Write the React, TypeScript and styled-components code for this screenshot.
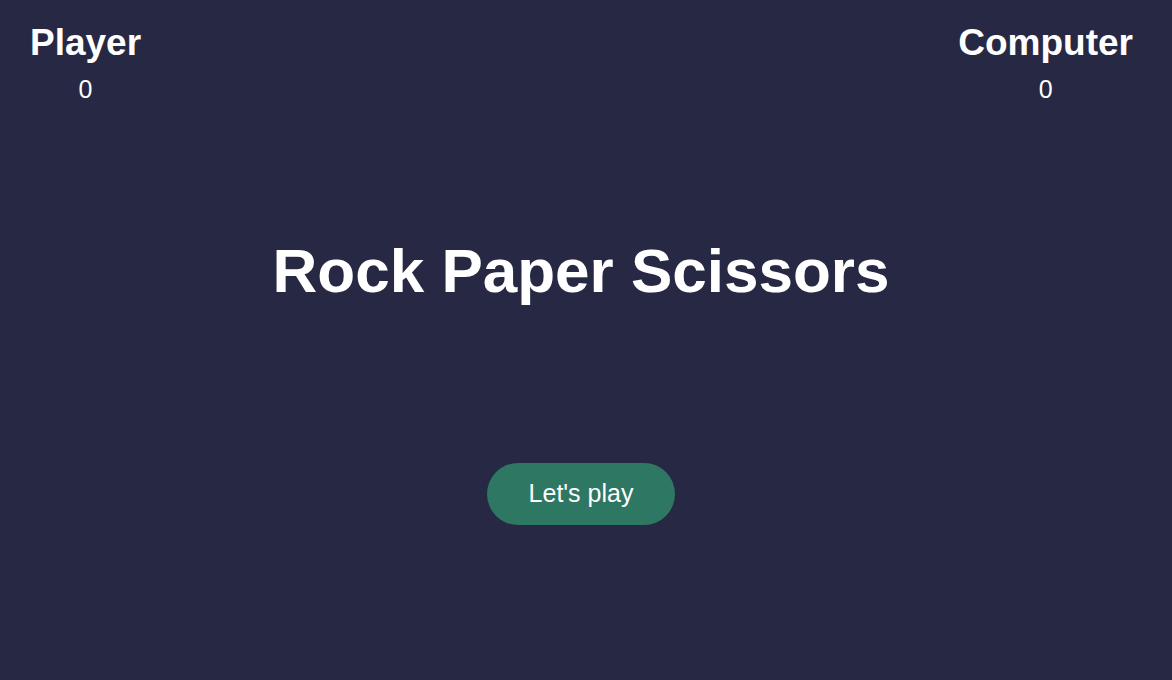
import React from "react";
import styled, { createGlobalStyle } from "styled-components";

const GlobalStyle = createGlobalStyle`
  html, body { margin: 0; padding: 0; }
  body {
    background: #272944;
    color: #ffffff;
    font-family: "Liberation Sans", Arial, sans-serif;
  }
`;

const Page = styled.div`
  width: 1172px;
  height: 680px;
  display: flex;
  flex-direction: column;
  box-sizing: border-box;
`;

const ScoreBar = styled.header`
  display: flex;
  justify-content: space-between;
  padding: 22px 39px 0 30px;
`;

const ScoreBlock = styled.div`
  display: flex;
  flex-direction: column;
  align-items: center;
`;

const ScoreLabel = styled.h2`
  margin: 0;
  font-size: 37px;
  font-weight: 700;
  line-height: 1.15;
`;

const ScoreValue = styled.div`
  font-size: 25px;
  line-height: 1.15;
  margin-top: 10px;
`;

const Main = styled.main`
  display: flex;
  flex-direction: column;
  align-items: center;
  padding-right: 10px;
`;

const Title = styled.h1`
  margin: 132px 0 0;
  text-align: center;
  font-size: 62px;
  font-weight: 700;
  line-height: 1.15;
`;

const PlayButton = styled.button`
  margin-top: 156px;
  width: 188px;
  height: 62px;
  border: none;
  border-radius: 31px;
  background: #2e7762;
  color: #ffffff;
  font-family: "Liberation Sans", Arial, sans-serif;
  font-size: 25px;
  cursor: pointer;
`;

export default function App() {
  return (
    <>
      <GlobalStyle />
      <Page>
        <ScoreBar>
          <ScoreBlock>
            <ScoreLabel>Player</ScoreLabel>
            <ScoreValue>0</ScoreValue>
          </ScoreBlock>
          <ScoreBlock>
            <ScoreLabel>Computer</ScoreLabel>
            <ScoreValue>0</ScoreValue>
          </ScoreBlock>
        </ScoreBar>
        <Main>
          <Title>Rock Paper Scissors</Title>
          <PlayButton>Let's play</PlayButton>
        </Main>
      </Page>
    </>
  );
}
